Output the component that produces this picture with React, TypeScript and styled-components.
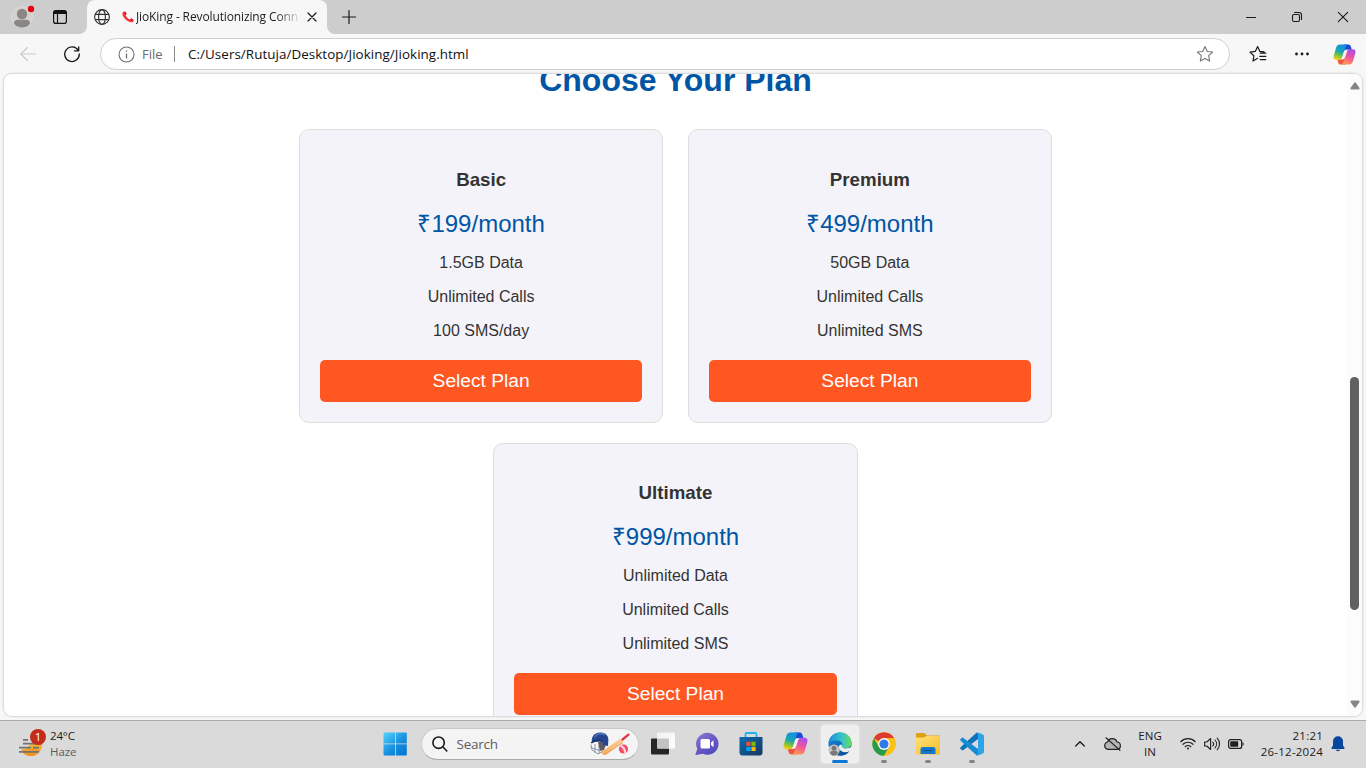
import React from 'react';
import styled, { createGlobalStyle } from 'styled-components';

const GlobalStyle = createGlobalStyle`
  * { box-sizing: border-box; }
  html, body { margin: 0; padding: 0; overflow: hidden; }
  body { font-family: "Open Sans", "Noto Sans", sans-serif; }
  svg { display: block; flex: none; overflow: visible; }
`;

const Desktop = styled.div`
  width: 1366px;
  height: 768px;
  display: flex;
  flex-direction: column;
  background: #f7f7f7;
  overflow: hidden;
`;

const TabStrip = styled.header`
  height: 34px;
  display: flex;
  background: #cdcdcd;
`;

const Slot = styled.div<{ $w: number }>`
  width: ${p => p.$w}px;
  flex: none;
  display: flex;
  align-items: center;
  justify-content: center;
`;

const Spacer = styled.div`
  flex: 1;
`;

const LeftCurve = styled.div`
  width: 8px;
  margin-left: 3px;
  background: radial-gradient(circle at 0 0, #cdcdcd 7.6px, #f7f7f7 8.3px) 0 100% / 8px 8px no-repeat;
`;

const RightCurve = styled.div`
  width: 8px;
  margin-right: -8px;
  background: radial-gradient(circle at 8px 0, #cdcdcd 7.6px, #f7f7f7 8.3px) 0 100% / 8px 8px no-repeat;
`;

const Tab = styled.div`
  width: 240px;
  display: flex;
  align-items: center;
  background: #f7f7f7;
  border-radius: 8px 8px 0 0;
  padding-left: 7px;
`;

const TabTitle = styled.div`
  width: 163px;
  margin-left: 2px;
  overflow: hidden;
  white-space: nowrap;
  font-size: 12px;
  line-height: 18px;
  letter-spacing: -0.12px;
  color: #1b1b1b;
  mask-image: linear-gradient(90deg, #000 86%, rgba(0, 0, 0, 0.1) 100%);
`;

const Toolbar = styled.div`
  height: 40px;
  display: flex;
  padding: 1px 0 1px 6px;
`;

const AddressBar = styled.div`
  width: 1130px;
  height: 32px;
  margin: 3px 6px 0;
  display: flex;
  align-items: center;
  background: #fff;
  border: 1px solid #d0d0d0;
  border-radius: 16px;
  padding-left: 16.5px;
`;

const Scheme = styled.span`
  width: 32px;
  margin-left: 7.5px;
  font-size: 13px;
  color: #6b6b6b;
`;

const Divider = styled.span`
  width: 1px;
  height: 16px;
  background: #8a8a8a;
`;

const Url = styled.span`
  flex: 1;
  margin-left: 13px;
  font-size: 13.4px;
  letter-spacing: 0.06px;
  color: #111;
  white-space: nowrap;
`;

const Viewport = styled.main`
  height: 642px;
  margin: 0 4px;
  display: flex;
  background: #fff;
  border-radius: 8px;
  overflow: hidden;
  box-shadow: 0 0 2px 1px rgba(0, 0, 0, 0.14);
`;

const Page = styled.div`
  width: 1343px;
  height: 642px;
  overflow: hidden;
  font-family: "Liberation Sans", Arial, sans-serif;
  text-align: center;
  color: #333;
`;

const Heading = styled.h2`
  margin: -12px 0 0;
  height: 67.4px;
  font-size: 32px;
  line-height: 37px;
  color: #0056a4;
`;

const Plans = styled.section`
  display: flex;
  flex-wrap: wrap;
  justify-content: center;
  gap: 20px 24.45px;
  padding: 0 250px;
`;

const PlanCard = styled.article`
  width: 364.3px;
  height: 293.6px;
  padding: 20px;
  background: #f4f3f9;
  border: 1px solid #ddd;
  border-radius: 10px;
`;

const PlanName = styled.h3`
  margin: 18.3px 0 0;
  font-size: 18.72px;
  line-height: 22px;
`;

const Price = styled.p`
  margin: 19px 0 16px;
  font-size: 24px;
  line-height: 28px;
  color: #0056a4;
`;

const Feature = styled.p`
  margin: 0 0 16px;
  font-size: 16px;
  line-height: 18px;
`;

const SelectButton = styled.button`
  display: block;
  width: 100%;
  height: 42px;
  margin-top: 20px;
  padding: 0;
  border: 0;
  border-radius: 5px;
  background: #ff5722;
  color: #fff;
  font: 19.2px/42px "Liberation Sans", Arial, sans-serif;
`;

const Scrollbar = styled.div`
  width: 15px;
  display: flex;
  flex-direction: column;
  align-items: center;
  padding-top: 8px;
  background: #fcfcfc;
`;

const Thumb = styled.div`
  width: 9px;
  height: 233px;
  margin: 287px 0 90px;
  border-radius: 4.5px;
  background: #606060;
`;

const Taskbar = styled.footer`
  height: 48px;
  margin-top: 4px;
  display: flex;
  align-items: center;
  background: #dadada;
  border-top: 1px solid #ababab;
  padding: 0 0 2px 18px;
`;

const Weather = styled.div`
  width: 356.5px;
  display: flex;
  align-items: center;
  gap: 6px;
`;

const WeatherText = styled.div<{ $muted?: boolean }>`
  font-size: 11.5px;
  line-height: 16px;
  letter-spacing: ${p => (p.$muted ? '-0.05px' : '-0.15px')};
  color: ${p => (p.$muted ? '#5c5c5c' : '#1c1c1c')};
`;

const SearchBox = styled.div`
  width: 218px;
  height: 32px;
  margin: 0 2.5px 0 5px;
  padding: 0 8px 0 10px;
  display: flex;
  align-items: center;
  background: #f4f4f4;
  border: 1px solid #c9c9c9;
  border-bottom-color: #aaa;
  border-radius: 16px;
`;

const SearchLabel = styled.span`
  flex: 1;
  margin-left: 9px;
  font-size: 13.5px;
  letter-spacing: -0.25px;
  color: #5c5c5c;
`;

const AppSlot = styled.div<{ $active?: boolean; $running?: boolean }>`
  position: relative;
  width: 38px;
  height: 38px;
  margin: 0 3.1px;
  display: flex;
  align-items: center;
  justify-content: center;
  border-radius: 4px;
  background: ${p => (p.$active ? '#eeeeee' : 'transparent')};
  box-shadow: ${p => (p.$active ? '0 0 0 1px #e4e4e4' : 'none')};
  &::after {
    content: '';
    display: ${p => (p.$active || p.$running ? 'block' : 'none')};
    position: absolute;
    bottom: 0;
    width: ${p => (p.$active ? 16 : 6)}px;
    height: 3px;
    border-radius: 2px;
    background: ${p => (p.$active ? '#0f78d4' : '#858585')};
  }
`;

const Stacked = styled.div<{ $w: number; $align: string; $gap: string }>`
  width: ${p => p.$w}px;
  flex: none;
  text-align: ${p => p.$align};
  font-size: 11.5px;
  line-height: 16px;
  letter-spacing: ${p => p.$gap};
  color: #1a1a1a;
  white-space: nowrap;
`;

const Line = ({ size = 16, d, w = 1.1, color = '#1a1a1a' }: { size?: number; d: string; w?: number; color?: string }) => (
  <svg width={size} height={size} viewBox={`0 0 ${size} ${size}`} fill="none" stroke={color} strokeWidth={w} strokeLinecap="round" strokeLinejoin="round">
    <path d={d} />
  </svg>
);

const Avatar = () => (
  <svg width="22" height="22" viewBox="0 0 22 22">
    <circle cx="11" cy="11" r="10.4" fill="#d4d1ce" stroke="#dedbd8" />
    <circle cx="11" cy="8" r="5.2" fill="#8a8683" />
    <path d="M3 17.500C3 14.600 5 13.800 7 13.800h8c2 0 4 .8 4 3.700a10 10 0 0 1-16 0z" fill="#8a8683" />
    <circle cx="20" cy="3" r="3.2" fill="#e60012" />
  </svg>
);

const Workspaces = () => (
  <svg width="14" height="14" viewBox="0 0 14 14">
    <rect x=".6" y=".6" width="12.8" height="12.8" rx="2.2" fill="none" stroke="#111" strokeWidth="1.2" />
    <path d="M2.500.5h9A2 2 0 0 1 13.500 3v1H.5V3a2 2 0 0 1 2-2.500z" fill="#111" />
    <path d="M4.500 4v9" stroke="#111" strokeWidth="1.2" />
  </svg>
);

const Globe = () => (
  <svg width="16" height="16" viewBox="0 0 16 16" fill="none" stroke="#303030" strokeWidth="1.1">
    <circle cx="8" cy="8" r="7.4" />
    <ellipse cx="8" cy="8" rx="3.4" ry="7.4" />
    <path d="M1.200 5.400h13.600M1.200 10.600h13.600" />
  </svg>
);

const Phone = () => (
  <svg width="12" height="12" viewBox="0 0 12 12">
    <path d="M1 1.200C2.300-.3 3.500.6 4.400 2.400c.4.9-.8 1.200-.8 1.900 0 1 2.900 4 4 4.100.8 0 1.100-1.200 2-.8 1.800.8 2.900 1.900 1.400 3.200C7.800 13.500-2.200 4.500 1 1.200z" fill="#f8312f" />
    <path d="M2.400.6C3.300.4 3.900 1.300 4.400 2.400c.4.9-.8 1.200-.8 1.900zM9.600 7.600c1 .5 1.800 1 2 1.800L7.700 8.400c.8 0 1-1.200 1.900-.8z" fill="#ba1668" />
  </svg>
);

const starPath = 'M9 1.500l2.250 4.950 5.350.6-3.950 3.650 1.050 5.350L9 13.400l-4.700 2.650 1.050-5.350L1.400 7.050l5.350-.6z';

const Favorites = () => (
  <svg width="18" height="18" viewBox="0 0 18 18" fill="none" stroke="#1a1a1a" strokeWidth="1.2" strokeLinejoin="round" strokeLinecap="round">
    <path d="M8.600 13.300L4 16l.9-5.300L1 7.100l5.300-.7L8.600 1.500l2.300 4.900 4.200.5M11.200 8.200h5.600M10.800 11.400h6M11.200 14.600h5.600" />
  </svg>
);

const Copilot = ({ id, size = 24 }: { id: string; size?: number }) => (
  <svg width={size} height={size} viewBox="0 0 24 24">
    <defs>
      <linearGradient id={`${id}a`} x1=".6" y1="0" x2=".3" y2="1">
        <stop offset="0" stopColor="#168de8" /><stop offset=".45" stopColor="#16a6b4" /><stop offset=".7" stopColor="#6cc04a" /><stop offset="1" stopColor="#f5d20b" />
      </linearGradient>
      <linearGradient id={`${id}b`} x1=".7" y1="0" x2=".3" y2="1">
        <stop offset="0" stopColor="#a64df0" /><stop offset=".5" stopColor="#f0569c" /><stop offset="1" stopColor="#ff9b52" />
      </linearGradient>
    </defs>
    <path d="M11 1.500h5c1.700 0 2.300 1 2.800 2.800L19.600 7H15c-2 0-2.700 1-3.300 3z" fill="#174bd0" />
    <path d="M13 22.500H8.200c-1.700 0-2.400-1-2.900-2.800L4.500 17H9c2 0 2.700-1 3.300-3z" fill="#ef5540" />
    <path d="M7.300 1.500h8c-1.300.6-2 1.900-2.500 3.500L9.800 14.500c-.7 2-1.500 3-3.300 3H3.400C.9 17.500 0 15.800.7 13.200L3.300 4.600C3.900 2.500 5.200 1.500 7.300 1.500z" fill={`url(#${id}a)`} />
    <path d="M16.700 22.500h-8c1.300-.6 2-1.900 2.500-3.500l3-9.500c.7-2 1.500-3 3.300-3h3.100c2.500 0 3.400 1.700 2.700 4.300l-2.600 8.600c-.6 2.100-1.900 3.100-4 3.100z" fill={`url(#${id}b)`} />
    <path d="M13.200 7h2.600c-.9.6-1.300 1.500-1.700 2.800l-1.800 5.500c-.4 1.100-.9 1.700-1.800 1.700H8.200c.9-.6 1.300-1.500 1.700-2.800l1.700-5.500C12 7.500 12.500 7 13.200 7z" fill="#f5f1f1" />
  </svg>
);

const Haze = () => (
  <svg width="26" height="28" viewBox="0 0 26 28">
    <defs><linearGradient id="sun" x2="0" y2="1"><stop stopColor="#f5bd36" /><stop offset="1" stopColor="#f28a19" /></linearGradient></defs>
    <path d="M13.500 13H24a11 9.500 0 0 1-1 6.500 11 10.500 0 0 1-18.500 3L3.500 19H8z" fill="url(#sun)" />
    <path d="M5 9.800h5M5 13.600h19M1 17.600h12M15 17.600h6M1 21.800h20" stroke="#737373" strokeWidth="1.7" />
    <circle cx="20" cy="7" r="8" fill="#c42b1c" />
    <text x="20" y="11" fontSize="11.5" fill="#fff" textAnchor="middle" fontFamily="Open Sans">1</text>
  </svg>
);

const Windows = () => (
  <svg width="24" height="24" viewBox="0 0 24 24">
    <defs><linearGradient id="win" gradientUnits="userSpaceOnUse" x1="1" y1="1" x2="22" y2="24"><stop stopColor="#54d1fb" /><stop offset=".55" stopColor="#1590df" /><stop offset="1" stopColor="#0673d0" /></linearGradient></defs>
    <path d="M1.500.5H12v11H.5v-10a1 1 0 0 1 1-1zM12.800.5h10a1 1 0 0 1 1 1v10h-11zM.5 12.300H12v11.200H1.500a1 1 0 0 1-1-1zM12.800 12.300h11v10.200a1 1 0 0 1-1 1h-10z" fill="url(#win)" />
  </svg>
);

const Cricket = () => (
  <svg width="40" height="24" viewBox="0 0 40 24">
    <defs><linearGradient id="bat" x1="0" y1="1" x2="1" y2="0"><stop stopColor="#f4a95c" /><stop offset="1" stopColor="#ffd39a" /></linearGradient></defs>
    <path d="M1 12.500l1 5.500 6 4 5-3M.5 15.500l9 3 4-3M5 12v9M9 13v9" fill="none" stroke="#8c98a3" strokeWidth="1" />
    <path d="M8 10h9l-3 8-4 1z" fill="#5f5965" />
    <path d="M2 10.500C1 5 4 .8 10 .5c6-.3 9 4 8.300 8.500L18 14l-4.500-1-1.500-4L2 10.500z" fill="#25458e" />
    <path d="M4.500 5.500C6.500 1.500 12 .8 15 3" fill="none" stroke="#537bc4" strokeWidth="1.4" />
    <path d="M1.200 10.800C5 8 9 8 12.500 9.500" fill="none" stroke="#172f67" strokeWidth="1.5" />
    <path d="M12 19.500L30.500 6.500l3 4L16 22.800c-1.800 1.200-5.500-1.300-4-3.300z" fill="url(#bat)" />
    <path d="M15 22.500L33 10.500" stroke="#d9935a" strokeWidth=".6" />
    <path d="M32.500 7.500l6-4.800" stroke="#dc354d" strokeWidth="2.300" strokeLinecap="round" />
    <circle cx="33.500" cy="17" r="4.600" fill="#f04b68" />
    <path d="M30.500 13.500c2 1 4.500 4 4.800 7.500" fill="none" stroke="#ffd3dc" strokeWidth="2.200" />
  </svg>
);

const TaskView = () => (
  <svg width="24" height="24" viewBox="0 0 24 24">
    <defs><linearGradient id="tv" x2="1" y2="1"><stop stopColor="#f1f1f1" /><stop offset="1" stopColor="#fff" /></linearGradient></defs>
    <rect x="0" y="6.500" width="18" height="16" rx="1" fill="#262626" />
    <rect x="6" y=".5" width="18" height="16" rx="1" fill="url(#tv)" />
    <path d="M6 6.500h11a1 1 0 0 1 1 1v9H7a1 1 0 0 1-1-1z" fill="#c3c3c3" />
  </svg>
);

const Chat = () => (
  <svg width="24" height="24" viewBox="0 0 24 24">
    <defs><linearGradient id="chat" x2=".7" y2="1"><stop stopColor="#8f7bd0" /><stop offset=".5" stopColor="#6c5cc6" /><stop offset="1" stopColor="#5049bf" /></linearGradient></defs>
    <path d="M12.500.8a11 11 0 1 1-4.800 20.900L1 23c-.5 0-.7-.5-.5-.9l1.800-5A11.200 11.200 0 0 1 12.500.8z" fill="url(#chat)" />
    <rect x="5.500" y="7" width="9.500" height="9.500" rx="1.500" fill="#fff" />
    <path d="M16 10.500l2.500-2.300v7L16 13z" fill="#fff" />
  </svg>
);

const Store = () => (
  <svg width="24" height="24" viewBox="0 0 24 24">
    <defs><linearGradient id="store" x2="1" y2="1"><stop stopColor="#0f6cb4" /><stop offset="1" stopColor="#17375f" /></linearGradient></defs>
    <path d="M6.500 6V2.200c0-.8.4-1.200 1.200-1.200h8.600c.8 0 1.200.4 1.200 1.200V6" fill="none" stroke="#20b4ed" strokeWidth="1.800" />
    <path d="M.5 5h23v15.500a3 3 0 0 1-3 3h-17a3 3 0 0 1-3-3z" fill="url(#store)" />
    <path d="M7.300 9.700h4.200v4.200H7.300z" fill="#f25022" /><path d="M12.400 9.700h4.200v4.200h-4.200z" fill="#7fba00" />
    <path d="M7.300 14.800h4.200V19H7.300z" fill="#00a4ef" /><path d="M12.400 14.800h4.200V19h-4.200z" fill="#ffb900" />
  </svg>
);

const Edge = () => (
  <svg width="24" height="24" viewBox="0 0 24 24">
    <defs>
      <linearGradient id="edgeTop" x2="1"><stop stopColor="#188ed7" /><stop offset=".55" stopColor="#35c1cf" /><stop offset="1" stopColor="#6bdc59" /></linearGradient>
      <linearGradient id="edgeLow" x2="1" y2="1"><stop stopColor="#1689dc" /><stop offset="1" stopColor="#0a4f9c" /></linearGradient>
    </defs>
    <circle cx="12" cy="12" r="11.500" fill="url(#edgeLow)" />
    <path d="M.6 10.500C1.600 4.300 6.200.4 12 .4c6.800 0 11.600 5 11.600 10.200 0 3.800-2.700 6-6.200 6-2.700 0-4.200-1-3.800-2.100 1.800-2.500-.1-6-5-6-3.300 0-6 .7-8 2z" fill="url(#edgeTop)" />
    <path d="M13.800 13.500c-.4 1.600 1 3 4 3 2.200 0 4-.5 5.800-1.700l.4 2.200-3 3c-4.800 1.500-10.800-1.600-10.200-5 .2-1.200 1-2.200 1.500-2.500.8.300 1.700.3 1.500 1z" fill="#eee" />
    <path d="M10.500 13c-.8 5 3 8 8.500 7.300l2.500-1.300c-2.500 4-7.500 5.600-11.800 4z" fill="#0d579f" />
    <circle cx="6" cy="18.200" r="5.700" fill="#c8c8c8" />
    <circle cx="6" cy="16.200" r="2.500" fill="#7b7774" /><path d="M2 21c0-3 8-3 8 0-1.500 3.400-6.500 3.400-8 0z" fill="#7b7774" />
  </svg>
);

const Chrome = () => (
  <svg width="24" height="24" viewBox="0 0 24 24">
    <circle cx="12" cy="12" r="11.700" fill="#fbc116" />
    <path d="M12 12L1.870 6.150A11.700 11.700 0 0 1 22.130 6.150L12 6.150z" fill="#dd3d31" />
    <path d="M1.870 6.150A11.700 11.700 0 0 0 12 23.700l5.100-8.800L12 12 6.900 14.900z" fill="#259b4e" />
    <path d="M12 6.150h10.130A11.700 11.700 0 0 1 12 23.700l5.100-8.800z" fill="#fbc116" />
    <circle cx="12" cy="12" r="5.900" fill="#fff" /><circle cx="12" cy="12" r="4.600" fill="#3178e8" />
  </svg>
);

const Folder = () => (
  <svg width="24" height="24" viewBox="0 0 24 24">
    <defs><linearGradient id="fold" x2="1" y2="1"><stop stopColor="#ffe07a" /><stop offset="1" stopColor="#f7bd24" /></linearGradient></defs>
    <path d="M0 2.200c0-.7.4-1.200 1.200-1.200h7l2.800 2.500h12c.7 0 1 .5 1 1V13H0z" fill="#dda10e" />
    <path d="M0 5.500h7.800L10.500 4H23c.7 0 1 .4 1 1v16.500c0 .7-.4 1-1 1H1c-.6 0-1-.3-1-1z" fill="url(#fold)" />
    <path d="M4.500 22v-4.500c0-1.700.8-2.500 2.500-2.500h10c1.700 0 2.500.8 2.500 2.500V22z" fill="#1479c9" /><path d="M7.500 18.500h9" stroke="#0b5599" strokeWidth="1.200" />
  </svg>
);

const Code = () => (
  <svg width="24" height="24" viewBox="0 0 24 24">
    <path d="M18 5.700v12.600L9.500 12z" fill="#dadada" />
    <path d="M17 .2L.6 15.300c-.6.5-.6 1.100 0 1.600l1.300 1.200c.4.4 1 .4 1.500 0L20 5.500z" fill="#0d72b7" />
    <path d="M17 23.800L.6 8.700c-.6-.5-.6-1.100 0-1.600l1.300-1.200c.4-.4 1-.4 1.500 0L20 18.500z" fill="#168bd2" />
    <path d="M17 .2c.2-.1.5-.1.8 0l5.400 2.500c.5.2.8.6.8 1.200v16.200c0 .6-.3 1-.8 1.200l-5.400 2.500c-.3.1-.6.1-.8 0 .7 0 1-.5 1-1.200V1.400c0-.7-.3-1.200-1-1.200z" fill="#2ba4eb" />
  </svg>
);

const CloudOff = () => (
  <svg width="17" height="14" viewBox="0 0 17 14" fill="none" stroke="#202020" strokeWidth="1.2" strokeLinecap="round">
    <path d="M4 12.300A3.700 3.700 0 0 1 3.700 5C4.500.8 11.500.3 13 5c4.500.2 4.500 7.300 0 7.300z" fill="#b5b5b5" />
    <path d="M2 .8l14 12.600" />
  </svg>
);

const Wifi = () => (
  <svg width="16" height="13" viewBox="0 0 16 13" fill="none" stroke="#202020" strokeWidth="1.2" strokeLinecap="round">
    <path d="M.8 4.700a10.200 10.200 0 0 1 14.400 0M3 7.300a7.100 7.100 0 0 1 10 0M5.200 9.700a4 4 0 0 1 5.600 0" /><circle cx="8" cy="11.500" r="1" fill="#202020" stroke="none" />
  </svg>
);

const Volume = () => (
  <svg width="16" height="14" viewBox="0 0 16 14" fill="none" stroke="#202020" strokeWidth="1.1" strokeLinecap="round" strokeLinejoin="round">
    <path d="M.6 5h2.200L6.600 1.500v11L2.800 9H.6zM8.800 5a3 3 0 0 1 0 4M11 3a6 6 0 0 1 0 8M13.200 1.200a8.500 8.500 0 0 1 0 11.600" />
  </svg>
);

const Battery = () => (
  <svg width="16" height="10" viewBox="0 0 16 10">
    <rect x=".6" y=".6" width="13" height="8.800" rx="2" fill="none" stroke="#202020" strokeWidth="1.2" />
    <rect x="2.200" y="2.200" width="8" height="5.600" rx=".8" fill="#202020" /><path d="M14.500 3.200c1.600 0 1.600 3.600 0 3.600z" fill="#202020" />
  </svg>
);

const Bell = () => (
  <svg width="14" height="16" viewBox="0 0 14 16" fill="#06469c">
    <path d="M7 .3a5 5 0 0 1 5 5v4.200l1.500 2.300c.3.6 0 1.200-.6 1.200H1.100c-.6 0-.9-.6-.6-1.200L2 9.500V5.300a5 5 0 0 1 5-5zM4.700 13.800h4.600c-.5 1.900-4.100 1.900-4.600 0z" />
  </svg>
);

const plans = [
  { name: 'Basic', price: '₹199/month', features: ['1.5GB Data', 'Unlimited Calls', '100 SMS/day'] },
  { name: 'Premium', price: '₹499/month', features: ['50GB Data', 'Unlimited Calls', 'Unlimited SMS'] },
  { name: 'Ultimate', price: '₹999/month', features: ['Unlimited Data', 'Unlimited Calls', 'Unlimited SMS'] },
];

export default function App() {
  return (
    <>
      <GlobalStyle />
      <Desktop>
        <TabStrip>
          <Slot $w={44}><Avatar /></Slot>
          <Slot $w={32}><Workspaces /></Slot>
          <LeftCurve />
          <Tab>
            <Globe />
            <Slot $w={12} />
            <Phone />
            <TabTitle>JioKing - Revolutionizing Conn</TabTitle>
            <Slot $w={25}><Line size={10} d="M1 1l8 8M9 1L1 9" w={1.2} /></Slot>
          </Tab>
          <RightCurve />
          <Slot $w={43}><Line size={14} d="M7 .5v13M.5 7h13" w={1.2} /></Slot>
          <Spacer />
          <Slot $w={46}><Line size={10} d="M.5 5.500h9" w={1} /></Slot>
          <Slot $w={46}><Line size={10} d="M2.500.5H7a2.500 2.500 0 0 1 2.500 2.500v4.500M2 2.500h4a1.500 1.500 0 0 1 1.500 1.500v4A1.500 1.500 0 0 1 6 9.500H2A1.500 1.500 0 0 1 .5 8V4A1.500 1.500 0 0 1 2 2.500" /></Slot>
          <Slot $w={46}><Line size={10} d="M.3.3l9.400 9.400M9.700.3L.3 9.700" /></Slot>
        </TabStrip>
        <Toolbar>
          <Slot $w={44}><Line size={16} d="M15.500 8H.7M7.500 1.500L.7 8l6.800 6.500" color="#c9c9c9" /></Slot>
          <Slot $w={44}><Line size={16} d="M14.300 4.500A7.300 7.300 0 1 0 15.300 8M14.700.8v4h-4.200" w={1.3} /></Slot>
          <AddressBar>
            <svg width="17" height="17" viewBox="0 0 17 17" fill="none" stroke="#6f6f6f" strokeWidth="1.1">
              <circle cx="8.500" cy="8.500" r="7.500" /><path d="M8.500 7.500v5M8.500 4.500v1.300" strokeWidth="1.3" />
            </svg>
            <Scheme>File</Scheme>
            <Divider />
            <Url>C:/Users/Rutuja/Desktop/Jioking/Jioking.html</Url>
            <Slot $w={48}><Line size={18} d={starPath} color="#747474" /></Slot>
          </AddressBar>
          <Slot $w={44}><Favorites /></Slot>
          <Slot $w={44}>
            <svg width="14" height="4" viewBox="0 0 14 4" fill="#1a1a1a"><circle cx="1.500" cy="2" r="1.400" /><circle cx="7" cy="2" r="1.400" /><circle cx="12.500" cy="2" r="1.400" /></svg>
          </Slot>
          <Slot $w={40}><Copilot id="top" size={23} /></Slot>
        </Toolbar>
        <Viewport>
          <Page>
            <Heading>Choose Your Plan</Heading>
            <Plans>
              {plans.map(plan => (
                <PlanCard key={plan.name}>
                  <PlanName>{plan.name}</PlanName>
                  <Price>{plan.price}</Price>
                  {plan.features.map(f => <Feature key={f}>{f}</Feature>)}
                  <SelectButton>Select Plan</SelectButton>
                </PlanCard>
              ))}
            </Plans>
          </Page>
          <Scrollbar>
            <svg width="10" height="8" viewBox="0 0 10 8"><path d="M4 1Q5-.3 6 1l3.500 5Q10 7.500 8.500 7.500h-7Q0 7.500.5 6z" fill="#858585" /></svg>
            <Thumb />
            <svg width="10" height="8" viewBox="0 0 10 8"><path d="M4 7Q5 8.300 6 7l3.500-5Q10 .5 8.500.5h-7Q0 .5.5 2z" fill="#858585" /></svg>
          </Scrollbar>
        </Viewport>
        <Taskbar>
          <Weather>
            <Haze />
            <div><WeatherText>24°C</WeatherText><WeatherText $muted>Haze</WeatherText></div>
          </Weather>
          <Slot $w={41}><Windows /></Slot>
          <SearchBox>
            <Line size={16} d="M11 11l3.800 4M12.300 6.700a5.700 5.700 0 1 1-11.400 0 5.700 5.700 0 0 1 11.400 0" w={1.6} />
            <SearchLabel>Search</SearchLabel>
            <Cricket />
          </SearchBox>
          <AppSlot><TaskView /></AppSlot>
          <AppSlot><Chat /></AppSlot>
          <AppSlot><Store /></AppSlot>
          <AppSlot><Copilot id="task" size={25} /></AppSlot>
          <AppSlot $active><Edge /></AppSlot>
          <AppSlot $running><Chrome /></AppSlot>
          <AppSlot $running><Folder /></AppSlot>
          <AppSlot $running><Code /></AppSlot>
          <Spacer />
          <Slot $w={32}><Line size={10} d="M.7 7L5 2.700 9.300 7" w={1.3} /></Slot>
          <Slot $w={32}><CloudOff /></Slot>
          <Stacked $w={44} $align="center" $gap="0.1px">ENG<br />IN</Stacked>
          <Slot $w={2} />
          <Slot $w={28}><Wifi /></Slot>
          <Slot $w={20}><Volume /></Slot>
          <Slot $w={28}><Battery /></Slot>
          <Stacked $w={73} $align="right" $gap="0.22px">21:21<br />26-12-2024</Stacked>
          <Slot $w={30}><Bell /></Slot>
          <Slot $w={13} />
        </Taskbar>
      </Desktop>
    </>
  );
}
